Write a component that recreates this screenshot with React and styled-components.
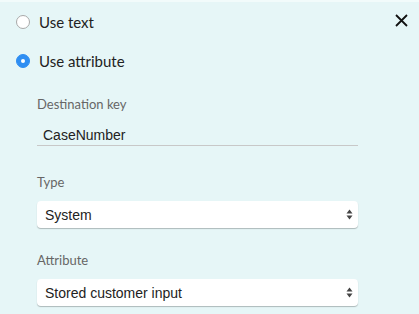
import React from 'react'
import styled, { createGlobalStyle } from 'styled-components'

const GlobalStyle = createGlobalStyle`
  html, body {
    margin: 0;
    padding: 0;
    background: #e6f6f7;
  }
  body {
    font-family: Lato, "Open Sans", sans-serif;
  }
`

const Panel = styled.div`
  position: relative;
  width: 419px;
  height: 314px;
  box-sizing: border-box;
  background: #e6f6f7;
  border-top: 2px solid #f2fbfb;
  padding: 13px 0 0 16px;
  overflow: hidden;
`

const CloseButton = styled.button`
  position: absolute;
  top: 11px;
  right: 10px;
  width: 15px;
  height: 15px;
  padding: 0;
  border: 0;
  background: none;
  display: flex;
  align-items: center;
  justify-content: center;
`

const RadioRow = styled.label`
  display: flex;
  align-items: center;
  gap: 9px;
  height: 14px;
  margin-bottom: 25px;
  font-size: 15px;
  color: #222;
`

const Radio = styled.span`
  width: 14px;
  height: 14px;
  box-sizing: border-box;
  border-radius: 50%;
  flex: none;
  display: flex;
  align-items: center;
  justify-content: center;
  background: ${p => (p.checked ? '#2f8ef2' : '#fff')};
  border: 1px solid ${p => (p.checked ? '#2f8ef2' : '#a9a9a9')};
  &::after {
    content: '';
    display: ${p => (p.checked ? 'block' : 'none')};
    width: 4px;
    height: 4px;
    border-radius: 50%;
    background: #fff;
  }
`

const Fields = styled.div`
  padding: 3px 0 0 21px;
  width: 321px;
`

const Field = styled.div`
  margin-bottom: ${p => p.gap || 0}px;
`

const Label = styled.div`
  font-size: 13px;
  color: #666;
  line-height: 16px;
  margin-bottom: ${p => p.space || 14}px;
`

const TextInput = styled.div`
  font-family: "Liberation Sans", Arial, sans-serif;
  font-size: 14px;
  color: #222;
  padding: 0 0 2px 6px;
  border-bottom: 1px solid #c8c8c8;
  line-height: 16px;
`

const Select = styled.div`
  height: 27px;
  box-sizing: border-box;
  background: #fff;
  border-radius: 4px;
  box-shadow: 0 1px 1px rgba(0, 0, 0, 0.25);
  display: flex;
  align-items: center;
  justify-content: space-between;
  padding: 0 5px 0 8px;
  font-family: "Liberation Sans", Arial, sans-serif;
  font-size: 14px;
  color: #222;
`

const Arrows = () => (
  <svg width="7" height="11" viewBox="0 0 7 11">
    <path d="M3.5 0.5 L6.5 4.5 H0.5 Z" fill="#444" />
    <path d="M3.5 10.5 L6.5 6.5 H0.5 Z" fill="#444" />
  </svg>
)

export default function App() {
  return (
    <>
      <GlobalStyle />
      <Panel>
        <CloseButton aria-label="Close">
          <svg width="13" height="13" viewBox="0 0 13 13">
            <path d="M1 1 L12 12 M12 1 L1 12" stroke="#111" strokeWidth="1.8" />
          </svg>
        </CloseButton>
        <RadioRow>
          <Radio />
          Use text
        </RadioRow>
        <RadioRow>
          <Radio checked />
          Use attribute
        </RadioRow>
        <Fields>
          <Field gap={28}>
            <Label space={15}>Destination key</Label>
            <TextInput>CaseNumber</TextInput>
          </Field>
          <Field gap={24}>
            <Label space={11}>Type</Label>
            <Select>
              System
              <Arrows />
            </Select>
          </Field>
          <Field>
            <Label space={11}>Attribute</Label>
            <Select>
              Stored customer input
              <Arrows />
            </Select>
          </Field>
        </Fields>
      </Panel>
    </>
  )
}
